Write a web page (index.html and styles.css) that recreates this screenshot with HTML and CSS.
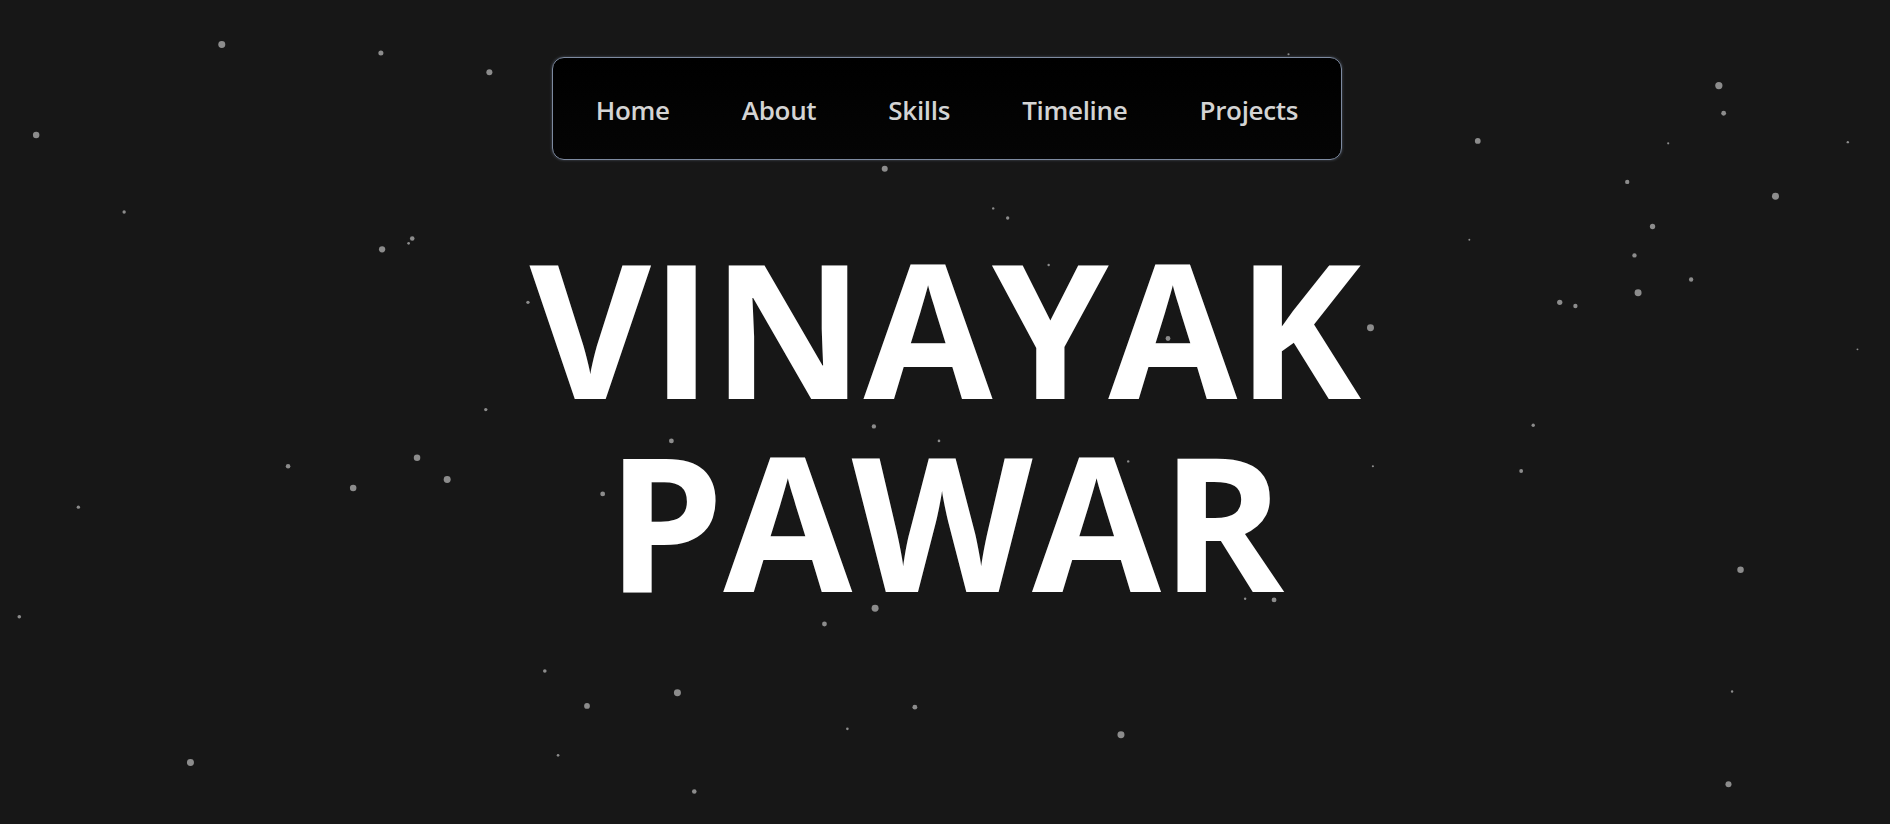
FILE: index.html
```html
<!DOCTYPE html>
<html lang="en">
<head>
<meta charset="utf-8">
<title>Vinayak Pawar</title>
<link rel="stylesheet" href="styles.css">
</head>
<body>
<div class="page">
  <svg class="stars" viewBox="0 0 1568 684" preserveAspectRatio="none" aria-hidden="true">
    <g fill="#8c8c8c">
      <circle cx="184" cy="37" r="2.9"/><circle cx="316" cy="44" r="2.1"/><circle cx="406" cy="60" r="2.5"/>
      <circle cx="30" cy="112" r="2.7"/><circle cx="103" cy="176" r="1.4"/><circle cx="317" cy="207" r="2.6"/>
      <circle cx="342" cy="198" r="1.9"/><circle cx="339" cy="202" r="1.1"/><circle cx="438" cy="251" r="1.4"/>
      <circle cx="403" cy="340" r="1.4"/><circle cx="346" cy="380" r="2.7"/><circle cx="371" cy="398" r="2.9"/>
      <circle cx="293" cy="405" r="2.7"/><circle cx="239" cy="387" r="1.9"/><circle cx="65" cy="421" r="1.4"/>
      <circle cx="16" cy="512" r="1.5"/><circle cx="452" cy="557" r="1.5"/><circle cx="487" cy="586" r="2.4"/>
      <circle cx="562" cy="575" r="2.9"/><circle cx="463" cy="627" r="1.1"/><circle cx="576" cy="657" r="1.9"/>
      <circle cx="158" cy="633" r="2.9"/><circle cx="703" cy="605" r="1.1"/><circle cx="759" cy="587" r="2"/>
      <circle cx="684" cy="518" r="2"/><circle cx="726" cy="505" r="2.9"/><circle cx="734" cy="140" r="2.5"/>
      <circle cx="824" cy="173" r="1"/><circle cx="836" cy="181" r="1.4"/><circle cx="870" cy="220" r="1"/>
      <circle cx="557" cy="366" r="2"/><circle cx="500" cy="410" r="2"/><circle cx="725" cy="354" r="1.8"/>
      <circle cx="779" cy="366" r="1.1"/><circle cx="969" cy="281" r="2"/><circle cx="1137" cy="272" r="2.9"/>
      <circle cx="1139" cy="387" r="0.9"/><circle cx="1033" cy="497" r="1"/><circle cx="1057" cy="498" r="2"/>
      <circle cx="936" cy="383" r="1"/><circle cx="930" cy="610" r="2.9"/><circle cx="1069" cy="45" r="0.9"/>
      <circle cx="1226" cy="117" r="2.4"/><circle cx="1426" cy="71" r="3"/><circle cx="1430" cy="94" r="2"/>
      <circle cx="1384" cy="119" r="0.9"/><circle cx="1533" cy="118" r="1"/><circle cx="1473" cy="163" r="2.9"/>
      <circle cx="1350" cy="151" r="1.8"/><circle cx="1371" cy="188" r="2.2"/><circle cx="1356" cy="212" r="1.8"/>
      <circle cx="1219" cy="199" r="0.8"/><circle cx="1294" cy="251" r="2.2"/><circle cx="1307" cy="254" r="1.8"/>
      <circle cx="1359" cy="243" r="2.9"/><circle cx="1403" cy="232" r="1.8"/><circle cx="1541" cy="290" r="0.8"/>
      <circle cx="1272" cy="353" r="1.4"/><circle cx="1262" cy="391" r="1.6"/><circle cx="1444" cy="473" r="2.7"/>
      <circle cx="1437" cy="574" r="1"/><circle cx="1434" cy="651" r="2.5"/>
      <circle cx="848" cy="120" r="2.5" fill="#222"/>
    </g>
  </svg>
  <header class="header">
    <nav class="nav">
      <a class="nav-link" href="#home">Home</a>
      <a class="nav-link" href="#about">About</a>
      <a class="nav-link" href="#skills">Skills</a>
      <a class="nav-link" href="#timeline">Timeline</a>
      <a class="nav-link" href="#projects">Projects</a>
    </nav>
  </header>
  <main class="hero">
    <h1 class="hero-title">
      <span class="hero-line">VINAYAK</span>
      <span class="hero-line">PAWAR</span>
    </h1>
  </main>
</div>
</body>
</html>
```
FILE: styles.css
```css
* { box-sizing: border-box; }
html, body { margin: 0; padding: 0; }
body {
  background: #171717;
  font-family: "Open Sans", "Noto Sans", sans-serif;
  overflow: hidden;
}
.page {
  position: relative;
  width: 100%;
  height: 824px;
  overflow: hidden;
}
.stars {
  position: absolute;
  left: 0;
  top: 0;
  width: 100%;
  height: 100%;
  z-index: 0;
}
.header {
  position: relative;
  z-index: 1;
  display: flex;
  justify-content: center;
  padding-top: 57px;
  padding-left: 4px;
}
.nav {
  display: flex;
  align-items: center;
  gap: 72px;
  height: 103px;
  padding: 2px 43px 0;
  background: linear-gradient(180deg, #000000 0%, #050505 100%);
  border: 1px solid #7d8aa0;
  border-radius: 12px;
  box-shadow: 0 0 3px rgba(140, 155, 180, 0.45);
}
.nav-link {
  color: #d4d4d4;
  text-decoration: none;
  font-size: 26px;
  font-weight: 600;
  letter-spacing: -0.3px;
}
.hero {
  position: relative;
  z-index: 1;
  display: flex;
  justify-content: center;
  padding-top: 70px;
}
.hero-title {
  margin: 0;
  color: #ffffff;
  font-family: "Open Sans", "Noto Sans", sans-serif;
  font-weight: 700;
  font-size: 187px;
  line-height: 193px;
  letter-spacing: -0.5px;
  text-align: center;
}
.hero-line {
  display: block;
}
```
